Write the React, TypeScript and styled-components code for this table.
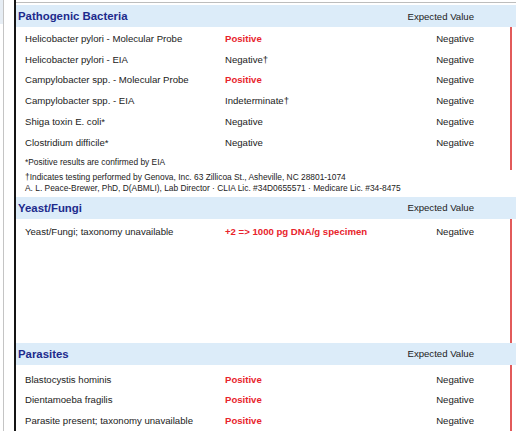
import React from "react";
import styled, { createGlobalStyle } from "styled-components";

const GlobalStyle = createGlobalStyle`
  html, body { margin: 0; padding: 0; background: #fff; }
  body { font-family: "Liberation Sans", Arial, Helvetica, sans-serif; color: #222; }
`;

const Page = styled.div`
  display: flex;
  width: 516px;
  height: 431px;
  overflow: hidden;
  background: #fff;
`;

const Gutter = styled.div`
  display: flex;
  width: 14px;
  flex: none;
  border-right: 2px solid #141414;
`;

const GutterTab = styled.div`
  width: 3px;
  align-self: flex-start;
  height: 24px;
  background: #e6edf4;
`;

const GutterRule = styled.div`
  width: 1px;
  background: #c4c4c4;
`;

const Main = styled.div`
  flex: 1;
  display: flex;
  flex-direction: column;
  margin-top: 2px;
  border-top: 1px solid #bdbdbd;
  padding-top: 2px;
  min-width: 0;
`;

const SectionHeader = styled.div`
  display: flex;
  align-items: center;
  justify-content: space-between;
  height: 22px;
  padding: 0 42px 0 2px;
  background: #dcecf9;
  flex: none;
`;

const SectionTitle = styled.h2`
  margin: 0;
  font-size: 11.4px;
  font-weight: bold;
  color: #1d2a8c;
`;

const HeaderLabel = styled.span`
  font-size: 9.6px;
  color: #222;
`;

const Table = styled.div<{ $padTop: number; $minHeight?: number }>`
  display: flex;
  flex-direction: column;
  margin-right: 4px;
  border-right: 2px solid #e25a5a;
  padding-top: ${(p) => p.$padTop}px;
  min-height: ${(p) => (p.$minHeight ? `${p.$minHeight}px` : "auto")};
  box-sizing: border-box;
  flex: none;
`;

const Row = styled.div`
  display: grid;
  grid-template-columns: 200px 1fr auto;
  align-items: center;
  height: 20.8px;
  padding: 0 36px 0 9px;
  font-size: 9.6px;
`;

const Cell = styled.span<{ $flag?: boolean }>`
  white-space: nowrap;
  color: ${(p) => (p.$flag ? "#e8232b" : "#222")};
  font-weight: ${(p) => (p.$flag ? "bold" : "normal")};
`;

const Expected = styled.span`
  white-space: nowrap;
  text-align: right;
`;

const Note = styled.div`
  padding: 4px 0 3px 9px;
  line-height: 10px;
  font-size: 8.4px;
`;

const Footnotes = styled.div`
  padding: 2px 0 3px 9px;
  font-size: 8.4px;
  line-height: 11px;
  margin-right: 6px;
`;

const FootLine = styled.div`
  white-space: nowrap;
`;

type Result = { name: string; result: string; flag?: boolean; expected: string };

const bacteria: Result[] = [
  { name: "Helicobacter pylori - Molecular Probe", result: "Positive", flag: true, expected: "Negative" },
  { name: "Helicobacter pylori - EIA", result: "Negative†", expected: "Negative" },
  { name: "Campylobacter spp. - Molecular Probe", result: "Positive", flag: true, expected: "Negative" },
  { name: "Campylobacter spp. - EIA", result: "Indeterminate†", expected: "Negative" },
  { name: "Shiga toxin E. coli*", result: "Negative", expected: "Negative" },
  { name: "Clostridium difficile*", result: "Negative", expected: "Negative" },
];

const yeast: Result[] = [
  { name: "Yeast/Fungi; taxonomy unavailable", result: "+2 => 1000 pg DNA/g specimen", flag: true, expected: "Negative" },
];

const parasites: Result[] = [
  { name: "Blastocystis hominis", result: "Positive", flag: true, expected: "Negative" },
  { name: "Dientamoeba fragilis", result: "Positive", flag: true, expected: "Negative" },
  { name: "Parasite present; taxonomy unavailable", result: "Positive", flag: true, expected: "Negative" },
];

const Rows: React.FC<{ items: Result[] }> = ({ items }) => (
  <>
    {items.map((r) => (
      <Row key={r.name}>
        <Cell>{r.name}</Cell>
        <Cell $flag={r.flag}>{r.result}</Cell>
        <Expected>{r.expected}</Expected>
      </Row>
    ))}
  </>
);

const Header: React.FC<{ title: string }> = ({ title }) => (
  <SectionHeader>
    <SectionTitle>{title}</SectionTitle>
    <HeaderLabel>Expected Value</HeaderLabel>
  </SectionHeader>
);

export default function App() {
  return (
    <>
      <GlobalStyle />
      <Page>
        <Gutter>
          <GutterTab />
          <GutterRule />
        </Gutter>
        <Main>
          <Header title="Pathogenic Bacteria" />
          <Table $padTop={1}>
            <Rows items={bacteria} />
            <Note>*Positive results are confirmed by EIA</Note>
          </Table>
          <Footnotes>
            <FootLine>†Indicates testing performed by Genova, Inc. 63 Zillicoa St., Asheville, NC 28801-1074</FootLine>
            <FootLine>A. L. Peace-Brewer, PhD, D(ABMLI), Lab Director · CLIA Lic. #34D0655571 · Medicare Lic. #34-8475</FootLine>
          </Footnotes>
          <Header title="Yeast/Fungi" />
          <Table $padTop={2} $minHeight={124}>
            <Rows items={yeast} />
          </Table>
          <Header title="Parasites" />
          <Table $padTop={4} $minHeight={80}>
            <Rows items={parasites} />
          </Table>
        </Main>
      </Page>
    </>
  );
}
